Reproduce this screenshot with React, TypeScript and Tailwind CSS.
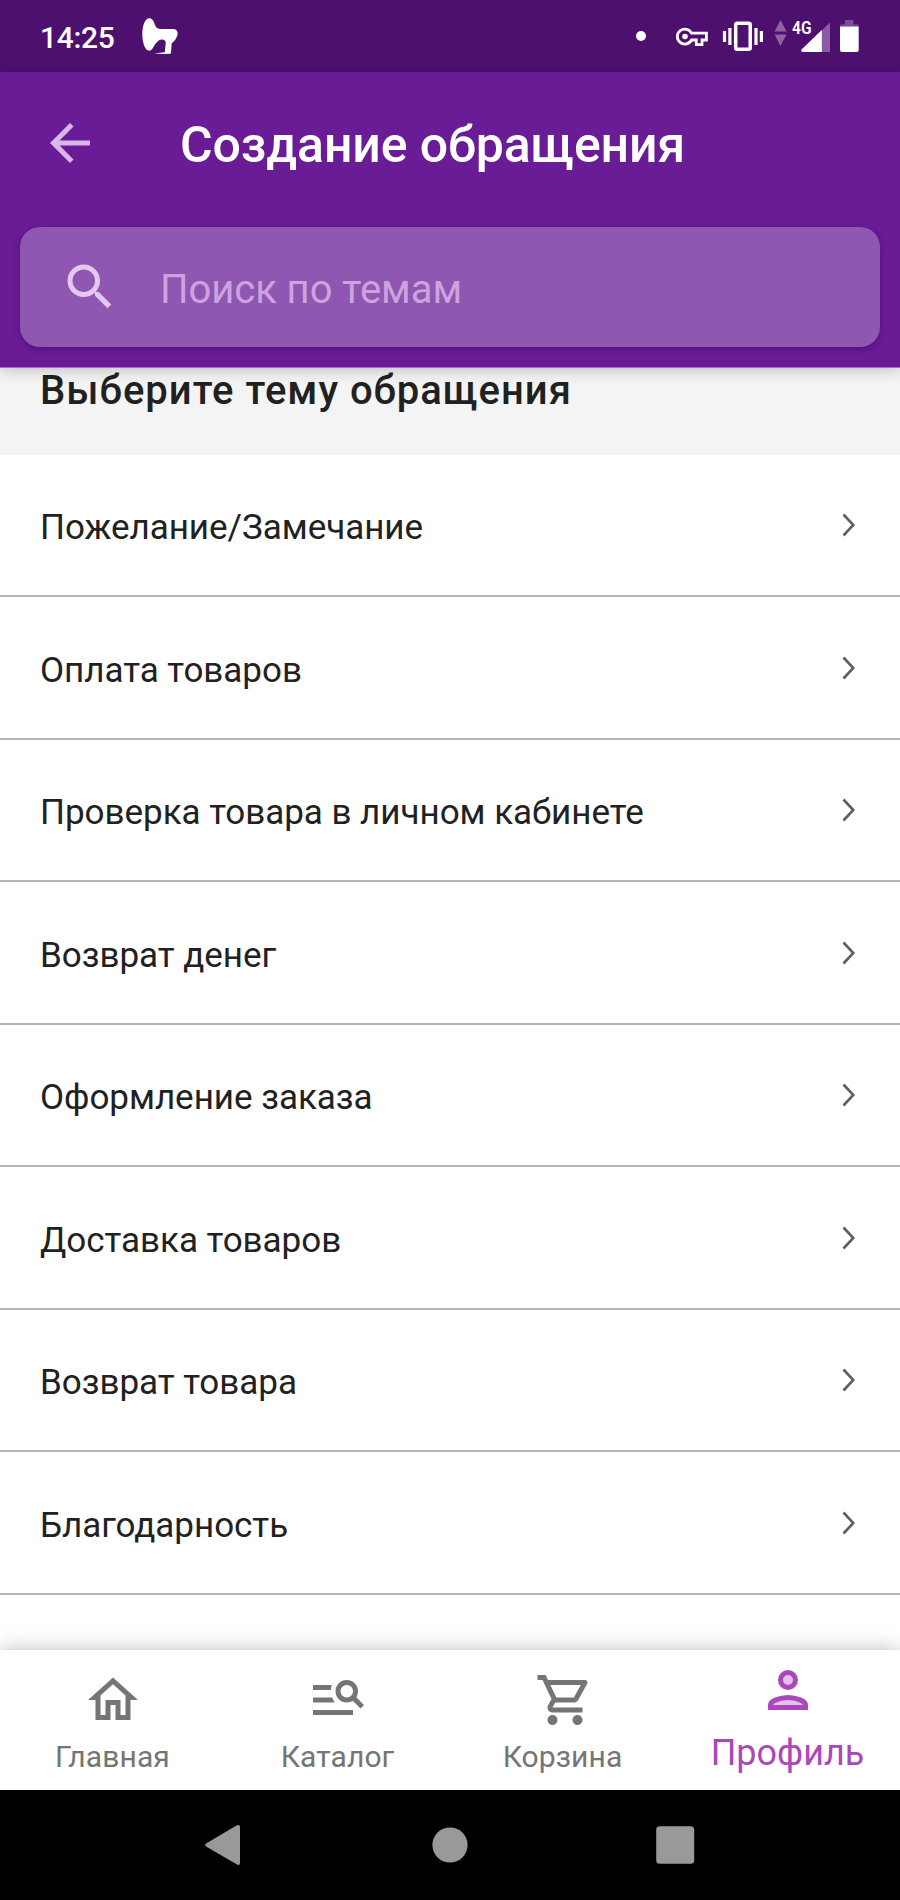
import type { ReactNode } from "react";
import { MdArrowBack, MdSearch, MdOutlineShoppingCart } from "react-icons/md";

const TOPICS = [
  "Пожелание/Замечание",
  "Оплата товаров",
  "Проверка товара в личном кабинете",
  "Возврат денег",
  "Оформление заказа",
  "Доставка товаров",
  "Возврат товара",
  "Благодарность",
];

function StatusBar() {
  return (
    <div className="flex h-[72px] shrink-0 items-center bg-[#4d106f] text-white">
      <span className="ml-10 w-[76px] pt-[3px] text-[30px] leading-none font-medium tracking-[-0.3px]">
        14:25
      </span>
      {/* Notification: cat silhouette */}
      <svg width="40" height="40" viewBox="0 0 40 40" className="ml-[24px]">
        <path
          d="M9 2.300C5.500 2.300 2.300 9 2.300 18.300S5.500 34.700 9 34.700C12.500 34.700 13.500 30 16 27.300C18 24.800 19.500 23.600 21.700 23.400C24.500 23.400 26.300 25 25.600 28L24.800 36.300L14 37.400L24 38L30 37.800Q31 37.800 31 36.500L31.700 27.300C33.500 25.800 35.200 24.500 36 22.300C37.200 20.500 37.700 19 37.700 17.300C37.600 14.500 35.500 13 33 13L20 13C17 12.600 15.800 11.500 15 9C13.800 5 12 2.300 9 2.300Z"
          fill="currentColor"
        />
      </svg>
      <svg width="240" height="72" viewBox="0 0 240 72" className="ml-auto mr-[30px]">
        <circle cx="11" cy="36" r="5" fill="#fff" />
        {/* VPN key */}
        <path
          d="M61.500 33.200H76.400V40H72V44.600H66.300V40H61.500A7.500 7.500 0 1 1 61.500 33.200Z"
          fill="none"
          stroke="#fff"
          strokeWidth="2.800"
        />
        <circle cx="55" cy="36.500" r="2.800" fill="#fff" />
        {/* Vibrate */}
        <rect x="105.700" y="23.200" width="14.500" height="26" rx="1.500" fill="none" stroke="#fff" strokeWidth="3.500" />
        <path d="M94.500 31V42M99.900 28V45M126 28V45M131.400 31V42" stroke="#fff" strokeWidth="3.200" />
        {/* Data arrows */}
        <path d="M144.500 31.500L150.500 20L156.500 31.500ZM144.500 34.500L150.500 46L156.500 34.500Z" fill="#8d629f" />
        <text x="162" y="34" fill="#fff" fontSize="18.500" fontWeight="600" textLength="19.500" lengthAdjust="spacingAndGlyphs">
          4G
        </text>
        <path d="M191 31L200 22.500V52H191Z" fill="#8a5ba3" />
        <path d="M171.500 49.500L191.800 30V52H173Q170.500 52 171.500 49.500Z" fill="#fff" />
        {/* Battery */}
        <path d="M210.500 26.500V24.500H215V20H223.500V24.500H228.500V26.500Z" fill="#7c4c96" />
        <path d="M210 26.500H228.700V50Q228.700 52 226.700 52H212Q210 52 210 50Z" fill="#fff" />
      </svg>
    </div>
  );
}

function Header() {
  return (
    <header className="relative z-10 h-[296px] shrink-0 border-b border-[#a46fc0] bg-[#6a1b96] shadow-[0_2px_14px_rgba(0,0,0,0.22)]">
      <div className="flex h-[155.3px] items-center pb-[13px]">
        <MdArrowBack className="ml-10 size-[60px] text-[#d9b8e8]" />
        <h1 className="ml-[80px] pt-[3px] text-[50px] leading-none font-medium tracking-[-0.1px] text-white">
          Создание обращения
        </h1>
      </div>
      <div className="mx-5 flex h-[120px] items-center rounded-[20px] bg-[#8f56b2] shadow-[0_2px_6px_rgba(40,0,70,0.35)]">
        <MdSearch className="ml-10 size-[60px] text-[#e3c9ee]" />
        <span className="ml-10 pt-[5px] text-[40px] leading-none tracking-[-0.05px] text-[#cda3de]">
          Поиск по темам
        </span>
      </div>
    </header>
  );
}

function TopicRow({ title }: { title: string }) {
  return (
    <li className="flex h-[142.5px] items-center justify-between border-b-2 border-[#b4b4b4] pr-[45px] pl-10">
      <span className="pt-[6px] text-[35px] leading-none tracking-[-0.03px] text-[#212121]">
        {title}
      </span>
      <svg width="13" height="24" viewBox="0 0 13 24" fill="none" className="mt-px">
        <path d="M1.500 1.500L11.300 12L1.500 22.500" stroke="#5f5f5f" strokeWidth="2.600" />
      </svg>
    </li>
  );
}

function Tab({ label, children }: { label: string; children: ReactNode }) {
  return (
    <div className="flex flex-1 flex-col items-center pt-5 text-[#757575]">
      {children}
      <span className="mt-[12px] text-[30px] leading-none tracking-[0.1px]">
        {label}
      </span>
    </div>
  );
}

function BottomNav() {
  return (
    <nav className="relative z-10 flex h-[140px] shrink-0 bg-white shadow-[0_0_20px_rgba(0,0,0,0.27)]">
      <Tab label="Главная">
        <svg className="size-[60px]" viewBox="0 0 24 24" fill="currentColor">
          <path d="M12 5.690l5 4.500V18h-2v-6H9v6H7v-7.810l5-4.500M12 3L2 12h3v8h6v-6h2v6h6v-8h3L12 3z" />
        </svg>
      </Tab>
      <Tab label="Каталог">
        <svg className="size-[60px]" viewBox="0 0 24 24">
          <path d="M2 6h7.500l-.4 2H2zM2 11h7.700q.3 1 1 2H2zM2 16h16v2H2z" fill="currentColor" />
          <circle cx="15.500" cy="8.500" r="3.500" fill="none" stroke="currentColor" strokeWidth="2" />
          <path d="M17.700 10.700l4 4" stroke="currentColor" strokeWidth="2" />
        </svg>
      </Tab>
      <Tab label="Корзина">
        <MdOutlineShoppingCart className="ml-[5px] size-[60px]" />
      </Tab>
      <div className="flex flex-1 flex-col items-center pt-[10px] text-[#ab47bc]">
        <svg className="size-[60px]" viewBox="0 0 24 24">
          <circle cx="12" cy="8" r="3" fill="#e3bfea" stroke="currentColor" strokeWidth="2" />
          <path d="M5 19v-1c0-1.500 3.500-3 7-3s7 1.500 7 3v1z" fill="#e3bfea" stroke="currentColor" strokeWidth="2" />
        </svg>
        <span className="mt-[15px] text-[36px] leading-none">
          Профиль
        </span>
      </div>
    </nav>
  );
}

function SystemNav() {
  return (
    <div className="flex h-[110px] shrink-0 items-center justify-center bg-black">
      <svg width="490" height="50" viewBox="0 0 490 50" fill="#999">
        <path d="M1.500 23.200L31.500 5.500Q35 4 35 7V43Q35 46 32 44.600L1.500 26.800Q-1 25 1.500 23.200Z" />
        <circle cx="245" cy="25" r="17.600" />
        <rect x="451.200" y="6.300" width="38" height="37.400" rx="3.500" />
      </svg>
    </div>
  );
}

function App() {
  return (
    <div className="flex h-[1900px] w-[900px] flex-col overflow-hidden bg-white font-['Roboto',sans-serif]">
      <StatusBar />
      <Header />
      <main className="min-h-0 flex-1 overflow-hidden">
        <div className="h-[86.5px] bg-[#f4f4f4] pt-[3px] pl-10">
          <h2 className="text-[40px] leading-none font-medium tracking-[1px] text-[#212121]">
            Выберите тему обращения
          </h2>
        </div>
        <ul>
          {TOPICS.map((title) => (
            <TopicRow key={title} title={title} />
          ))}
        </ul>
      </main>
      <BottomNav />
      <SystemNav />
    </div>
  );
}

export default App;
